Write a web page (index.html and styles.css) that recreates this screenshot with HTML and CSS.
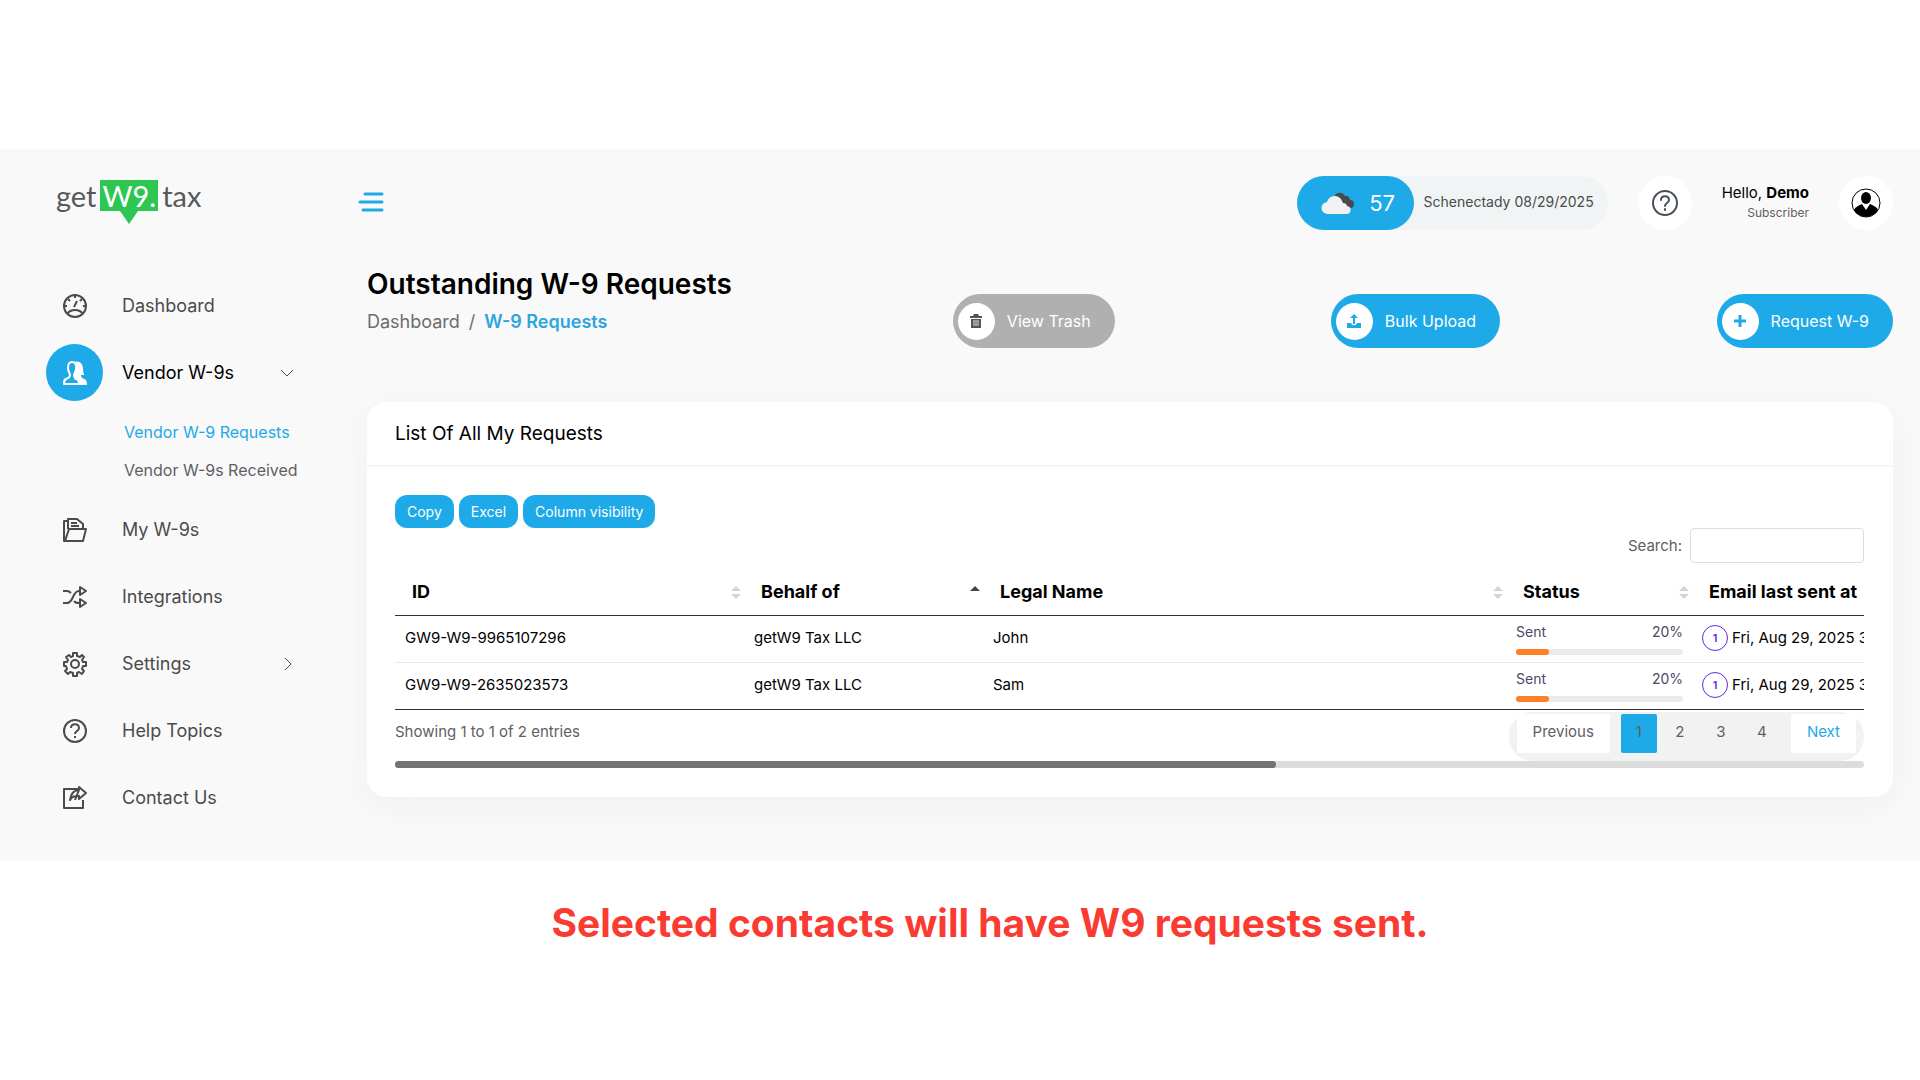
FILE: index.html
```html
<!DOCTYPE html>
<html lang="en">
<head>
  <meta charset="UTF-8">
  <title>getW9.tax - Outstanding W-9 Requests</title>
  <meta name="viewport" content="width=device-width, initial-scale=1.0">
  <link rel="stylesheet" href="styles.css">
</head>
<body>

  <div class="app">

    <!-- Sidebar -->
    <aside class="sidebar">
      <a class="logo" href="#">
        <span>get</span><span class="logo-tag">W9.</span><span>tax</span>
      </a>

      <nav class="menu">
        <a class="menu-item" href="#">
          <span class="menu-icon">
            <svg viewBox="0 0 24 24"><circle cx="12" cy="12" r="11"/><path d="M4 20c2-3 5-4 8-4s6 1 8 4M11 13l3-6M12 1v3M5 5l2 2M19 5l-2 2M1 12h3M20 12h3"/></svg>
          </span>
          <span>Dashboard</span>
        </a>
        <a class="menu-item active" href="#">
          <span class="menu-icon">
            <svg viewBox="0 0 24 24"><path d="M9 1c3 0 5 3 4 7 0 3-2 4-2 6s1 3 3 4c2 0 2 2 2 5H1c0-3 0-4 2-5 3-1 4-2 4-4S5 11 5 7c0-4 1-6 4-6z"/><path class="solid" d="M10 1c7-2 10 2 10 7 0 3 1 4 1 6h-3c0 2 1 3 3 4 2 0 3 2 3 6h-9c0-3 0-4-2-5-2 0-2-2-2-5s2-3 2-6c1-3 0-6-3-7z"/></svg>
          </span>
          <span>Vendor W-9s</span>
          <svg class="arrow" viewBox="0 0 14 14"><path d="M1 4l6 6 6-6"/></svg>
        </a>
        <div class="submenu">
          <a class="current" href="#">Vendor W-9 Requests</a>
          <a href="#">Vendor W-9s Received</a>
        </div>
        <a class="menu-item" href="#">
          <span class="menu-icon">
            <svg viewBox="0 0 24 24"><path d="M2 23L6 11h17l-3 12H1V3h4M5 11V1h9l6 5v5M8 5h6M8 8h8"/></svg>
          </span>
          <span>My W-9s</span>
        </a>
        <a class="menu-item" href="#">
          <span class="menu-icon">
            <svg viewBox="0 0 24 24"><path d="M0 6h4c2 0 3 1 4 2M0 18h4c7 0 5-12 12-12h2M11 16c1 2 3 2 5 2h2M17 2v8l6-4zM17 14v8l6-4z"/></svg>
          </span>
          <span>Integrations</span>
        </a>
        <a class="menu-item" href="#">
          <span class="menu-icon">
            <svg viewBox="0 0 24 24"><circle cx="12" cy="12" r="4"/><path d="M10 1h4v3l3 1 2-2 2 2-2 3 1 2h3v4h-3l-1 3 2 2-2 3-3-2-2 1v3h-4v-3l-3-1-2 2-3-3 2-2-1-3H1v-4h3l1-2-2-3 3-2 2 2 2-1z"/></svg>
          </span>
          <span>Settings</span>
          <svg class="arrow" viewBox="0 0 14 14"><path d="M5 1l6 6-6 6"/></svg>
        </a>
        <a class="menu-item" href="#">
          <span class="menu-icon">
            <svg viewBox="0 0 24 24"><circle cx="12" cy="12" r="11"/><path d="M8 9c0-5 8-5 8 0 0 3-4 3-4 6M12 17v2"/></svg>
          </span>
          <span>Help Topics</span>
        </a>
        <a class="menu-item" href="#">
          <span class="menu-icon">
            <svg viewBox="0 0 24 24"><path d="M15 3H1v19h19v-8M16 1l7 6-7 6v-3c-4 0-7 0-9 4 1-6 4-10 9-10zM12 14l4-10"/></svg>
          </span>
          <span>Contact Us</span>
        </a>
      </nav>
    </aside>

    <!-- Main area -->
    <main class="main">
      <header class="topbar">
        <button class="burger" type="button" aria-label="Toggle menu">
          <svg width="26" height="22" viewBox="0 0 26 22"><path d="M7 3h17M2 11h22M5 19h19" stroke="#1ea9e8" stroke-width="3" stroke-linecap="round"/></svg>
        </button>
        <div class="topbar-right">
          <div class="weather">
            <div class="weather-temp">
              <svg width="34" height="24" viewBox="0 0 34 24">
                <path d="M14 4a6 6 0 0 1 10 1 4 4 0 0 1 5 4 4 4 0 0 1 0 8H20z" fill="#4a4a4c"/>
                <path d="M7 23a6 6 0 0 1-1-12 8 8 0 0 1 14-3l2 4a4 4 0 0 1 4 3 4 4 0 0 1-1 8z" fill="#f2f2f2"/>
              </svg>
              57
            </div>
            <span class="weather-place">Schenectady 08/29/2025</span>
          </div>
          <a class="round" href="#" aria-label="Help">
            <svg width="28" height="28" viewBox="0 0 28 28" fill="none" stroke="#495057" stroke-width="2" stroke-linecap="round"><circle cx="14" cy="14" r="12"/><path d="M10 11c0-5 8-5 8 0 0 3-4 3-4 6M14 20v1"/></svg>
          </a>
          <div class="user">
            <div class="user-name">Hello, <strong>Demo</strong></div>
            <small>Subscriber</small>
          </div>
          <a class="round" href="#" aria-label="Profile">
            <svg width="30" height="30" viewBox="0 0 30 30"><circle cx="15" cy="15" r="14" fill="#fff" stroke="#000" stroke-width="1"/><path d="M3 22c1-3 4-4 8-6l4 6 4-6c4 2 7 3 8 6-5 9-19 9-24 0z"/><ellipse cx="15" cy="10" rx="5" ry="6"/></svg>
          </a>
        </div>
      </header>

      <section class="page-head">
        <div class="page-title">
          <div>
            <h1>Outstanding W-9 Requests</h1>
            <div class="breadcrumb">
              <a href="#">Dashboard</a><span>/</span><a class="here" href="#">W-9 Requests</a>
            </div>
          </div>
          <button class="pill gray" type="button">
            <span class="pill-icon">
              <svg viewBox="0 0 14 14"><path d="M1 2h3l1-2h4l1 2h3v2H1zM2 5h10v9H2z" fill="#555"/><path d="M5 6v6M7 6v6M9 6v6" stroke="#ddd"/></svg>
            </span>
            View Trash
          </button>
        </div>
        <button class="pill" type="button">
          <span class="pill-icon">
            <svg viewBox="0 0 14 14"><path d="M7 0l4 4H8v6H6V4H3zM0 9h4c1 3 5 3 6 0h4v5H0z" fill="#1ea9e8"/></svg>
          </span>
          Bulk Upload
        </button>
        <button class="pill" type="button">
          <span class="pill-icon">
            <svg viewBox="0 0 14 14"><path d="M7 1v12M1 7h12" stroke="#1ea9e8" stroke-width="3"/></svg>
          </span>
          Request W-9
        </button>
      </section>

      <section class="card">
        <h2>List Of All My Requests</h2>
        <div class="card-body">
          <div class="tools">
            <button type="button">Copy</button>
            <button type="button">Excel</button>
            <button type="button">Column visibility</button>
          </div>
          <div class="search">
            <label for="search">Search:</label>
            <input type="search" id="search">
          </div>

          <table class="requests">
            <colgroup>
              <col class="col-id">
              <col class="col-behalf">
              <col>
              <col class="col-status">
              <col class="col-email">
            </colgroup>
            <thead>
              <tr>
                <th class="sort">ID</th>
                <th class="sort asc">Behalf of</th>
                <th class="sort">Legal Name</th>
                <th class="sort">Status</th>
                <th>Email last sent at</th>
              </tr>
            </thead>
            <tbody>
              <tr>
                <td>GW9-W9-9965107296</td>
                <td>getW9 Tax LLC</td>
                <td>John</td>
                <td>
                  <div class="status"><span>Sent</span><span>20%</span></div>
                  <div class="bar"><div style="width: 20%"></div></div>
                </td>
                <td><div class="sent"><span class="count">1</span>Fri, Aug 29, 2025 3</div></td>
              </tr>
              <tr>
                <td>GW9-W9-2635023573</td>
                <td>getW9 Tax LLC</td>
                <td>Sam</td>
                <td>
                  <div class="status"><span>Sent</span><span>20%</span></div>
                  <div class="bar"><div style="width: 20%"></div></div>
                </td>
                <td><div class="sent"><span class="count">1</span>Fri, Aug 29, 2025 3</div></td>
              </tr>
            </tbody>
          </table>

          <div class="table-foot">
            <span class="info">Showing 1 to 1 of 2 entries</span>
            <div class="pages">
              <button class="step" type="button">Previous</button>
              <div class="numbers">
                <button class="on" type="button">1</button>
                <button type="button">2</button>
                <button type="button">3</button>
                <button type="button">4</button>
              </div>
              <button class="step next" type="button">Next</button>
            </div>
          </div>
          <div class="scroll"><div class="scroll-thumb"></div></div>
        </div>
      </section>
    </main>
  </div>

  <p class="caption">Selected contacts will have W9 requests sent.</p>

</body>
</html>
```
FILE: styles.css
```css
* {
  box-sizing: border-box;
}

body {
  margin: 0;
  padding-top: 149px;
  background: #fff;
  font-family: Inter, "Open Sans", sans-serif;
  font-size: 15px;
  color: #000;
}

a {
  color: inherit;
  text-decoration: none;
}

button {
  border: none;
  font-family: inherit;
  cursor: pointer;
}

.app {
  display: flex;
  background: #f9f9f9;
  padding-bottom: 35px;
}

/* Sidebar */
.sidebar {
  width: 340px;
  flex-shrink: 0;
  padding-top: 31px;
}

.logo {
  display: flex;
  gap: 4px;
  height: 46px;
  margin-left: 56px;
  font-family: Lato, sans-serif;
  font-size: 29px;
  line-height: 31px;
  color: #58595b;
}

.logo-tag {
  position: relative;
  height: 31px;
  padding: 0 2px;
  background: #2dc653;
  color: #fff;
}

/* speech bubble tip */
.logo-tag::after {
  content: "";
  position: absolute;
  top: 31px;
  left: 50%;
  margin-left: -9px;
  border: 9px solid transparent;
  border-top: 13px solid #2dc653;
}

.menu {
  display: flex;
  flex-direction: column;
  gap: 10px;
  margin-top: 51px;
  padding-left: 46px;
  padding-right: 46px;
}

.menu-item {
  display: flex;
  align-items: center;
  height: 57px;
  font-size: 18px;
  color: #4b4b4b;
}

.menu-icon {
  display: flex;
  align-items: center;
  justify-content: center;
  width: 57px;
  height: 57px;
  margin-right: 19px;
  border-radius: 50%;
}

.menu-icon svg {
  width: 24px;
  height: 24px;
  overflow: visible;
  fill: none;
  stroke: #4b4b4b;
  stroke-width: 2;
  stroke-linejoin: round;
}

.active {
  color: #000;
}

.active .menu-icon {
  background: #1ea9e8;
}

.active .menu-icon svg {
  stroke: #fff;
}

.menu-icon .solid {
  fill: #fff;
  stroke: none;
}

.arrow {
  width: 14px;
  height: 14px;
  margin-left: auto;
  fill: none;
  stroke: #4b4b4b;
  stroke-width: 1;
}

.submenu {
  display: flex;
  flex-direction: column;
  padding: 2px 0 2px 78px;
  font-size: 16px;
  line-height: 38px;
  color: #5f6062;
  white-space: nowrap;
}

.current {
  color: #1ea9e8;
}

/* Top bar */
.main {
  flex: 1;
  min-width: 0;
  padding: 24px 27px 0;
}

.topbar {
  display: flex;
  justify-content: space-between;
  align-items: center;
  height: 60px;
}

.burger {
  padding: 0;
  margin-left: -9px;
  background: none;
}

.topbar-right {
  display: flex;
  align-items: center;
  gap: 30px;
}

.weather {
  display: flex;
  align-items: center;
  height: 54px;
  padding-right: 14px;
  border-radius: 27px;
  background: #f0f4f5;
}

.weather-temp {
  display: flex;
  align-items: center;
  justify-content: center;
  gap: 14px;
  width: 117px;
  height: 54px;
  margin-right: 10px;
  padding-left: 6px;
  border-radius: 27px;
  background: #1ea9e8;
  color: #fff;
  font-size: 22px;
}

.weather-place {
  padding-bottom: 4px;
  font-size: 14px;
  color: #4b4b4b;
}

.round {
  display: flex;
  align-items: center;
  justify-content: center;
  width: 54px;
  height: 54px;
  border-radius: 50%;
  background: #fff;
}

.user {
  text-align: right;
  line-height: 20px;
}

.user small {
  display: block;
  font-size: 12px;
  color: #5f6062;
}

/* Title and actions */
.page-head {
  display: grid;
  grid-template-columns: 196fr 101fr 103fr;
  justify-items: end;
  margin-top: 31px;
  height: 138px;
}

.page-title {
  display: flex;
  justify-content: space-between;
  width: 100%;
}

h1 {
  margin: 0;
  font-size: 28px;
  font-weight: 600;
  line-height: 40px;
}

.breadcrumb {
  display: flex;
  gap: 9px;
  font-size: 18px;
  line-height: 36px;
  color: #6c6c6c;
}

.here {
  color: #2fa5e0;
  font-weight: 600;
}

.pill {
  display: flex;
  align-items: center;
  gap: 12px;
  height: 54px;
  margin-top: 30px;
  padding: 0 24px 0 5px;
  border-radius: 27px;
  background: #1ea9e8;
  color: #fff;
  font-size: 16px;
}

.gray {
  background: #b0b0b0;
}

.pill-icon {
  display: flex;
  align-items: center;
  justify-content: center;
  width: 37px;
  height: 37px;
  border-radius: 50%;
  background: #fff;
}

.pill-icon svg {
  width: 14px;
  height: 14px;
}

/* Card */
.card {
  border-radius: 20px;
  background: #fff;
  box-shadow: 0 8px 30px rgba(90, 60, 120, 0.05);
}

h2 {
  margin: 0;
  padding: 0 28px;
  border-bottom: 2px solid #f5f5f5;
  font-size: 19px;
  font-weight: 400;
  line-height: 63px;
}

.card-body {
  padding: 28px 29px 29px 28px;
}

.tools {
  display: flex;
  gap: 5px;
}

.tools button {
  height: 33px;
  padding: 0 12px;
  border-radius: 12px;
  background: #1ea9e8;
  color: #fff;
  font-size: 14px;
}

.search {
  display: flex;
  align-items: center;
  justify-content: flex-end;
  gap: 8px;
  color: #5f6062;
}

.search input {
  width: 174px;
  height: 35px;
  border: 1px solid #ddd;
  border-radius: 4px;
}

.requests {
  width: 100%;
  table-layout: fixed;
  border-collapse: collapse;
  border-bottom: 1px solid #333;
}

.col-id {
  width: 349px;
}

.col-behalf {
  width: 239px;
}

.col-status {
  width: 186px;
}

.col-email {
  width: 172px;
}

th {
  height: 52px;
  padding: 5px 0 0 17px;
  border-bottom: 1px solid #333;
  font-size: 18px;
  font-weight: 700;
  text-align: left;
  white-space: nowrap;
}

td {
  height: 47px;
  padding: 0 9px 2px 10px;
  overflow: hidden;
}

td:last-child {
  padding-right: 0;
}

tbody tr + tr td {
  border-top: 1px solid #e8e8e8;
}

/* sort arrows on the right of each heading */
.sort {
  position: relative;
}

.sort::before,
.sort::after {
  content: "";
  position: absolute;
  right: 3px;
  border: 5px solid transparent;
}

.sort::before {
  top: 18px;
  border-bottom-color: #d4d4d4;
}

.sort::after {
  top: 31px;
  border-top-color: #d4d4d4;
}

.asc::before {
  border-bottom-color: #444;
}

.asc::after {
  display: none;
}

.status {
  display: flex;
  justify-content: space-between;
  font-size: 14px;
  line-height: 22px;
  color: #4a4a68;
}

.bar {
  height: 6px;
  margin-top: 6px;
  border-radius: 3px;
  background: #e9ebec;
}

.bar div {
  height: 6px;
  border-radius: 3px;
  background: #ff7f27;
}

.sent {
  display: flex;
  align-items: center;
  gap: 4px;
  white-space: nowrap;
}

.count {
  flex-shrink: 0;
  width: 26px;
  height: 26px;
  border: 1px solid #5b2be0;
  border-radius: 50%;
  color: #5b2be0;
  font-size: 11px;
  font-weight: 600;
  line-height: 24px;
  text-align: center;
}

/* Footer of the table */
.table-foot {
  display: flex;
  justify-content: space-between;
  align-items: flex-start;
  margin-top: 2px;
  color: #5f6062;
}

.info {
  line-height: 40px;
}

.pages {
  display: flex;
  gap: 11px;
  height: 49px;
  padding: 2px 8px;
  border-radius: 24px;
  background: #f2f2f2;
}

.pages button {
  height: 39px;
  padding: 0 16px 3px;
  background: none;
  color: #5f6062;
  font-size: 15px;
}

.numbers {
  display: flex;
  gap: 5px;
}

.numbers button {
  width: 36px;
}

.pages .numbers button {
  padding: 0 0 3px;
}

.pages .on {
  border-radius: 2px;
  background: #1ea9e8;
}

.pages .step {
  background: #fff;
}

.pages .next {
  color: #1ea9e8;
}

.scroll {
  height: 7px;
  border-radius: 4px;
  background: #dcdcdc;
}

.scroll-thumb {
  width: 60%;
  height: 7px;
  border-radius: 4px;
  background: #737373;
}

.caption {
  margin: 0;
  padding: 32px 0 60px 60px;
  color: #fa3b32;
  font-size: 39px;
  font-weight: 700;
  line-height: 60px;
  text-align: center;
}
```
